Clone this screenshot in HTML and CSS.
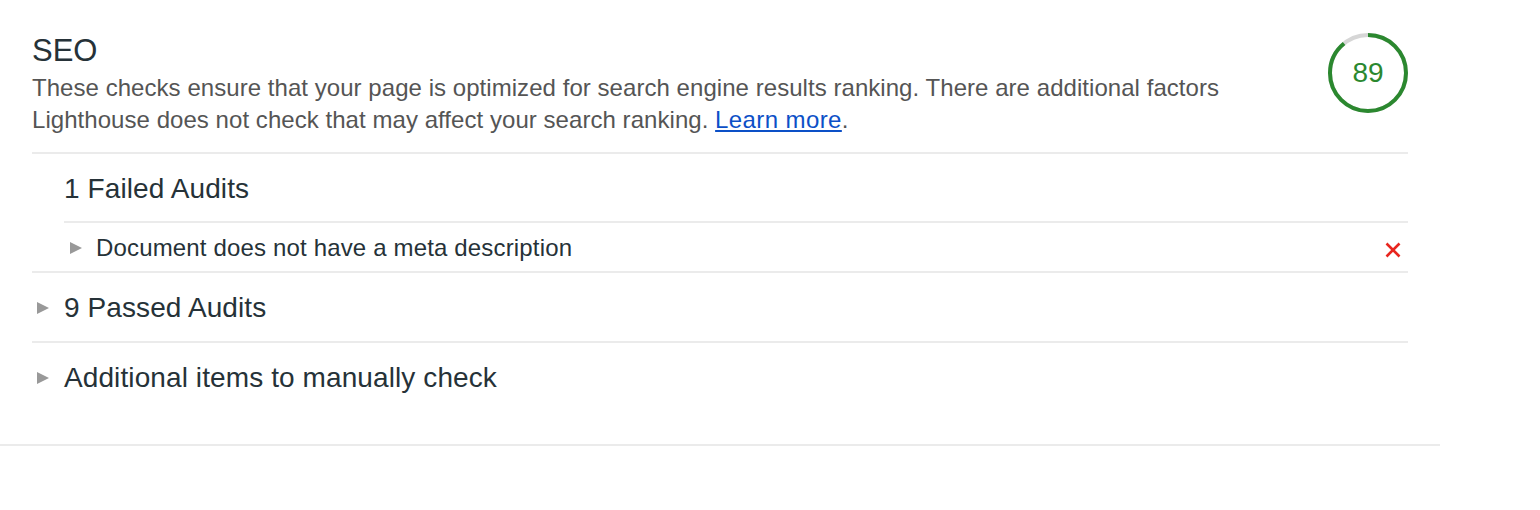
FILE: index.html
```html
<!DOCTYPE html>
<html lang="en">
<head>
<meta charset="utf-8">
<title>SEO</title>
<link rel="stylesheet" href="styles.css">
</head>
<body>
<section class="category">
  <div class="cat-inner">
    <header class="cat-header">
      <div class="cat-text">
        <h2 class="cat-title">SEO</h2>
        <p class="cat-desc">These checks ensure that your page is optimized for search engine results ranking. There are additional factors Lighthouse does not check that may affect your search ranking. <a class="link" href="#">Learn more</a>.</p>
      </div>
      <div class="gauge">
        <svg class="gauge-svg" width="82" height="82" viewBox="0 0 82 82">
          <circle cx="41" cy="41" r="38" fill="none" stroke="#d6d6d6" stroke-width="4"/>
          <circle cx="41" cy="41" r="38" fill="none" stroke="#2b882f" stroke-width="4" stroke-dasharray="212.5 238.76" transform="rotate(-90 41 41)"/>
        </svg>
        <span class="gauge-value">89</span>
      </div>
    </header>

    <div class="group group-failed">
      <div class="group-title plain">1 Failed Audits</div>
      <div class="audit">
        <span class="tri small"></span>
        <span class="audit-title">Document does not have a meta description</span>
        <svg class="fail-x" width="18" height="18" viewBox="0 0 18 18">
          <path d="M2.5 2.5 L15.5 15.5 M15.5 2.5 L2.5 15.5" stroke="#e8261f" stroke-width="2.6" fill="none"/>
        </svg>
      </div>
    </div>

    <div class="group">
      <div class="group-title passed"><span class="tri"></span>9 Passed Audits</div>
    </div>

    <div class="group last">
      <div class="group-title"><span class="tri"></span>Additional items to manually check</div>
    </div>
  </div>
</section>
</body>
</html>
```
FILE: styles.css
```css
* { box-sizing: border-box; }
body {
  margin: 0;
  background: #fff;
  font-family: "Liberation Sans", Arial, Helvetica, sans-serif;
  color: #263238;
}
.category {
  width: 1440px;
  padding: 0 32px 0 32px;
  border-bottom: 2px solid #ebebeb;
}
.cat-inner {
  padding-top: 33px;
}
.cat-header {
  display: flex;
  justify-content: space-between;
  align-items: flex-start;
  padding-bottom: 16px;
  border-bottom: 2px solid #ebebeb;
}
.cat-text { width: 1230px; }
.cat-title {
  margin: 0;
  font-size: 31px;
  font-weight: normal;
  line-height: 36px;
  color: #263238;
}
.cat-desc {
  margin: 3px 0 0 0;
  font-size: 24px;
  line-height: 32px;
  letter-spacing: 0.05px;
  color: #555;
}
.link { color: #0c50c7; text-decoration: underline; letter-spacing: 0.4px; }
.gauge {
  position: relative;
  width: 82px;
  height: 82px;
  margin-top: -1px;
  margin-right: -1px;
}
.gauge-svg { display: block; }
.gauge-value {
  position: absolute;
  inset: 0;
  display: flex;
  align-items: center;
  justify-content: center;
  font-size: 28px;
  color: #2b882f;
}
.group {
  border-bottom: 2px solid #ebebeb;
}
.group.last { border-bottom: none; padding-bottom: 32px; }
.group-title {
  display: flex;
  align-items: center;
  font-size: 28px;
  line-height: 36px;
  padding: 17px 0 16px;
  letter-spacing: 0.1px;
  color: #263238;
}
.group-title.passed { padding-bottom: 15px; }
.group-title.plain { padding-left: 32px; padding-top: 17px; padding-bottom: 14px; }
.tri {
  width: 0; height: 0;
  border-top: 6.5px solid transparent;
  border-bottom: 6.5px solid transparent;
  border-left: 12px solid #999;
  margin-left: 5px;
  margin-right: 15px;
}
.audit {
  margin-left: 32px;
  border-top: 2px solid #ebebeb;
  display: flex;
  align-items: center;
  padding: 9px 0 7px;
  font-size: 24px;
  line-height: 32px;
  letter-spacing: 0.16px;
  color: #263238;
}
.tri.small { margin-left: 6px; margin-right: 14px; }
.audit-title { flex: 1; }
.fail-x { margin-right: 6px; margin-top: 4px; }
```
